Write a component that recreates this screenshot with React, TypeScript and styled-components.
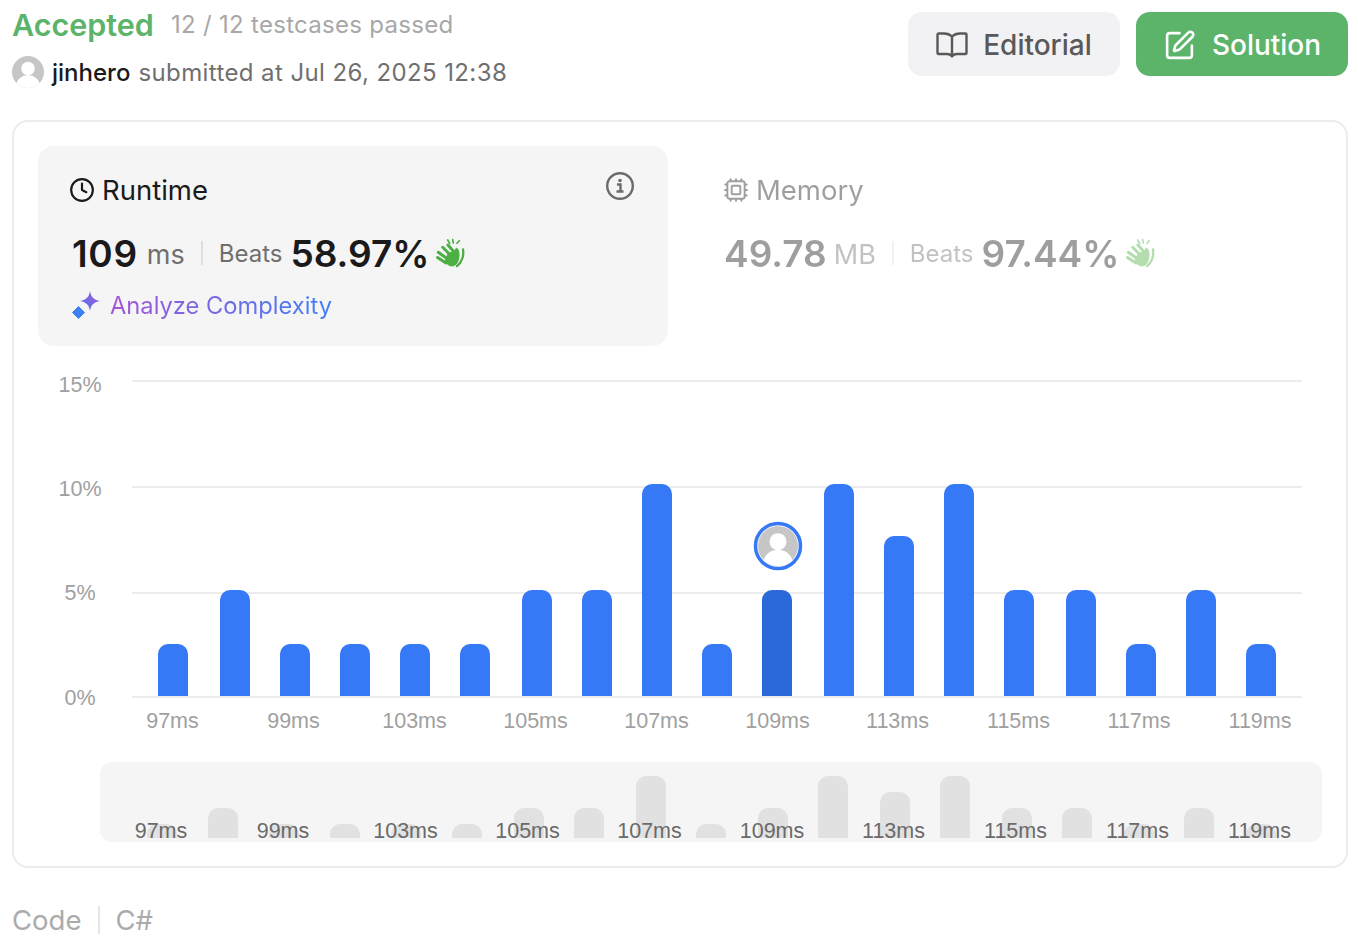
import React from "react";
import styled, { createGlobalStyle } from "styled-components";
import { Clock, Cpu, SquarePen } from "lucide-react";

const Global = createGlobalStyle`
  html, body { margin: 0; padding: 0; background: #fff; }
  body { font-family: Inter, "Liberation Sans", sans-serif; color: #1a1a1a; }
`;
const Page = styled.div`
  width: 1358px; height: 942px; box-sizing: border-box; padding: 12px 10px 0 12px; overflow: hidden;
`;
const Header = styled.header`
  display: flex; justify-content: space-between; align-items: flex-start; height: 108px;
`;
const Summary = styled.div`
  display: flex; flex-direction: column; margin-top: -6px;
`;
const StatusLine = styled.div`
  display: flex; align-items: center; gap: 17px; height: 38px;
`;
const Status = styled.h1`
  margin: 0; font-size: 30.5px; line-height: 38px; font-weight: 600; color: #5cb46a; letter-spacing: 0;
`;
const Cases = styled.span`
  font-size: 24px; color: #a8a8a8; letter-spacing: 0.3px; margin-top: -2px;
`;
const SubmitLine = styled.div`
  display: flex; align-items: center; margin-top: 12px; height: 32px; font-size: 24px; color: #6f6f6f; letter-spacing: 0.4px;
`;
const User = styled.span`
  color: #1a1a1a; font-weight: 500; margin: 0 8px; letter-spacing: 0;
`;
const Actions = styled.div`
  display: flex; gap: 16px;
`;
const ActionButton = styled.button<{ $primary?: boolean }>`
  width: 212px; height: 64px; border: 0; border-radius: 14px; display: flex; align-items: center; justify-content: center;
  gap: ${(p) => (p.$primary ? 16 : 15)}px; padding: 2px 0 0; font: 500 28px Inter, sans-serif;
  background: ${(p) => (p.$primary ? "#5cb36a" : "#f2f2f4")};
  color: ${(p) => (p.$primary ? "#fff" : "#595959")};
`;
const Card = styled.section`
  box-sizing: border-box; width: 1336px; height: 748px; border: 2px solid #ececec; border-radius: 16px; padding-top: 24px;
`;
const Metrics = styled.div`
  display: flex; height: 200px; padding-left: 24px;
`;
const RuntimePanel = styled.div`
  box-sizing: border-box; width: 630px; background: #f5f5f5; border-radius: 16px; padding: 28px 33px 0 31px;
`;
const MemoryPanel = styled.div`
  padding: 28px 0 0 55px; opacity: 0.42;
`;
const TitleRow = styled.div`
  display: flex; align-items: center; justify-content: space-between; height: 32px;
`;
const Title = styled.div`
  display: flex; align-items: center; gap: 7px; font-size: 27.5px; line-height: 32px;
`;
const Values = styled.div<{ $inset: number }>`
  display: flex; align-items: center; margin-top: 24px; height: 46px; padding-left: ${(p) => p.$inset}px;
`;
const Big = styled.span<{ $track?: number }>`
  font-size: 37px; font-weight: 600; letter-spacing: ${(p) => p.$track ?? 0}px;
`;
const Unit = styled.span<{ $gap: number }>`
  font-size: 27px; color: #6f6f6f; margin-left: ${(p) => p.$gap}px; margin-top: 2px;
`;
const Rule = styled.span`
  width: 2px; height: 24px; background: #dedede; margin: 0 16px;
`;
const BeatsLabel = styled.span`
  font-size: 24px; color: #6f6f6f; margin-right: 8px;
`;
const AnalyzeLink = styled.div`
  display: flex; align-items: center; gap: 8px; margin-top: 14px; margin-left: 3px;
`;
const GradientText = styled.span`
  font-size: 23.7px; background: linear-gradient(90deg, #a455d6, #3f7ff5); -webkit-background-clip: text; background-clip: text; color: transparent;
`;
const ChartBox = styled.div`
  height: 416px;
`;
const MiniBox = styled.div`
  margin-left: 86px; width: 1222px; height: 80px; background: #f5f5f5; border-radius: 12px;
`;
const Plot = styled.svg`
  display: block; overflow: visible; font-family: "Liberation Sans", Arial, sans-serif;
`;
const LangLine = styled.div`
  display: flex; align-items: center; margin-top: 35px; height: 34px; font-size: 27.5px; color: #ababab;
`;
const LangRule = styled.span`
  width: 2px; height: 28px; background: #e5e5e5; margin: 0 15px 0 17px;
`;
const HandIcon = styled.svg`
  margin-left: 5px; flex: none;
`;
const InfoBadge = styled.span`
  display: flex; margin-top: -9px;
`;

const Hand = () => (
  <HandIcon width="32" height="32" viewBox="0 0 32 32" fill="none" stroke="#4caf43" strokeLinecap="round">
    <path d="M13.700 3l2 3.300M18.700 2.700l.6 3.300M25.300 3.700l-2.300 2.600" strokeWidth="1.700" />
    <path d="M3.500 20.500l8.500 5.500M4.300 15.300l9.400 6.700M8.700 10.300l8.300 8.400M14 8l6 7" strokeWidth="3" />
    <path d="M11 24.500l3-8 6-2 2.500-3.500c2 1 2.500 4 2.500 7 0 5-2 11-7.500 11-2.500 0-4-2-6.500-4.500z" fill="#4caf43" strokeWidth="1" />
    <path d="M29 12.500c1 6-1 13-6 16.500" strokeWidth="2.300" />
  </HandIcon>
);
const Sparkle = () => (
  <svg width="30" height="30" viewBox="0 0 30 30">
    <defs>
      <linearGradient id="sp" x1="0" y1="1" x2="1" y2="0">
        <stop offset="0" stopColor="#4f78f0" />
        <stop offset="1" stopColor="#a455d6" />
      </linearGradient>
    </defs>
    <path d="M18 1c1 6 3.500 8.500 10 10-6.500 1.500-9 4-10 10-1-6-3.500-8.500-10-10 6.500-1.500 9-4 10-10z" fill="url(#sp)" />
    <path d="M6.500 16.500l6 6-6 6-6-6z" fill="#3f7ff5" stroke="#3f7ff5" strokeLinejoin="round" strokeWidth="1" />
  </svg>
);
const AvatarFigure = ({ id }: { id: string }) => (
  <>
    <defs><clipPath id={id}><circle cx="16" cy="16" r="16" /></clipPath></defs>
    <g clipPath={`url(#${id})`}>
      <rect width="32" height="32" fill="#c6c6c6" />
      <circle cx="16" cy="12.500" r="6.800" fill="#fff" />
      <ellipse cx="16" cy="29" rx="11.500" ry="10" fill="#fff" />
    </g>
  </>
);
const BookIcon = () => (
  <svg width="32" height="26" viewBox="0 0 32 26" fill="none" stroke="#595959" strokeWidth="2.400" strokeLinejoin="round">
    <path d="M16 4.500C14 2.500 11 1.500 8 1.500H2.500a1 1 0 0 0-1 1V21a1 1 0 0 0 1 1H11c2 0 4 .8 5 2.500 1-1.700 3-2.500 5-2.500h8.500a1 1 0 0 0 1-1V2.500a1 1 0 0 0-1-1H24c-3 0-6 1-8 3zM16 4.500V24.500" />
  </svg>
);
const InfoIcon = () => (
  <svg width="30" height="30" viewBox="0 0 30 30" fill="none">
    <circle cx="15" cy="15" r="12.800" stroke="#6b6b6b" strokeWidth="2.400" />
    <circle cx="15" cy="9.500" r="1.800" fill="#6b6b6b" />
    <path d="M12 13.500h3.500V20M11.500 20.500h7" stroke="#6b6b6b" strokeWidth="2.400" />
  </svg>
);

const barX = [158, 220, 280, 340, 400, 460, 522, 582, 642, 702, 762, 824, 884, 944, 1004, 1066, 1126, 1186, 1246];
const barTop = [644, 590, 644, 644, 644, 644, 590, 590, 484, 644, 590, 484, 536, 484, 590, 590, 644, 590, 644];
const xLabels = ["97ms", "99ms", "103ms", "105ms", "107ms", "109ms", "113ms", "115ms", "117ms", "119ms"];
const xCenter = [172.5, 293.5, 414.5, 535.5, 656.5, 777.5, 897.5, 1018.5, 1139, 1260];
const grid = [
  { y: 381, base: 392, t: "15%" },
  { y: 487, base: 496, t: "10%" },
  { y: 593, base: 600, t: "5%" },
  { y: 697, base: 705, t: "0%" },
];
const miniX = [147, 208, 269, 330, 391, 452, 514, 574, 636, 696, 758, 818, 880, 940, 1002, 1062, 1124, 1184, 1246];
const miniH = [14, 30, 14, 14, 14, 14, 30, 30, 62, 14, 30, 62, 46, 62, 30, 30, 14, 30, 14];
const miniLabelX = [161, 283, 405.5, 527.5, 649.5, 772, 893.5, 1015.5, 1137.5, 1259.5];

const topRounded = (x: number, top: number, bottom: number, w: number, r: number) =>
  `M${x} ${bottom}V${top + r}a${r} ${r} 0 0 1 ${r}-${r}h${w - 2 * r}a${r} ${r} 0 0 1 ${r} ${r}V${bottom}z`;

const MainChart = () => (
  <Plot width="1332" height="416" viewBox="14 346 1332 416">
    {grid.map((g) => (
      <g key={g.y}>
        <line x1="132" x2="1302" y1={g.y} y2={g.y} stroke="#ececec" strokeWidth="2" />
        <text x="80" y={g.base} textAnchor="middle" fontSize="21.5" fill="#a0a0a0">{g.t}</text>
      </g>
    ))}
    {barX.map((x, i) => (
      <path key={x} d={topRounded(x, barTop[i], 696, 30, 10)} fill={i === 10 ? "#2b69db" : "#3579f6"} />
    ))}
    {xLabels.map((t, i) => (
      <text key={t} x={xCenter[i]} y="728" textAnchor="middle" fontSize="21.5" fill="#a0a0a0">{t}</text>
    ))}
    <circle cx="778" cy="546" r="22.500" fill="#fff" stroke="#3579f6" strokeWidth="3.500" />
    <svg x="758" y="526" width="40" height="40" viewBox="0 0 32 32">
      <AvatarFigure id="chart-avatar" />
    </svg>
  </Plot>
);
const MiniChart = () => (
  <Plot width="1222" height="80" viewBox="100 762 1222 80">
    {miniX.map((x, i) => (
      <path key={x} d={topRounded(x, 838 - miniH[i], 838, 30, 10)} fill="#e1e1e1" />
    ))}
    {xLabels.map((t, i) => (
      <text key={t} x={miniLabelX[i]} y="838" textAnchor="middle" fontSize="21.5" fill="#6a6a6a">{t}</text>
    ))}
  </Plot>
);

export default function App() {
  return (
    <Page>
      <Global />
      <Header>
        <Summary>
          <StatusLine>
            <Status>Accepted</Status>
            <Cases>12 / 12 testcases passed</Cases>
          </StatusLine>
          <SubmitLine>
            <svg width="32" height="32" viewBox="0 0 32 32"><AvatarFigure id="header-avatar" /></svg>
            <User>jinhero</User>
            submitted at Jul 26, 2025 12:38
          </SubmitLine>
        </Summary>
        <Actions>
          <ActionButton><BookIcon />Editorial</ActionButton>
          <ActionButton $primary><SquarePen size={33} strokeWidth={1.9} />Solution</ActionButton>
        </Actions>
      </Header>
      <Card>
        <Metrics>
          <RuntimePanel>
            <TitleRow>
              <Title><Clock size={26} strokeWidth={2} />Runtime</Title>
              <InfoBadge><InfoIcon /></InfoBadge>
            </TitleRow>
            <Values $inset={3}>
              <Big $track={0.7}>109</Big><Unit $gap={9}>ms</Unit><Rule />
              <BeatsLabel>Beats</BeatsLabel><Big>58.97%</Big><Hand />
            </Values>
            <AnalyzeLink>
              <Sparkle />
              <GradientText>Analyze Complexity</GradientText>
            </AnalyzeLink>
          </RuntimePanel>
          <MemoryPanel>
            <TitleRow>
              <Title><Cpu size={26} strokeWidth={1.8} />Memory</Title>
            </TitleRow>
            <Values $inset={1}>
              <Big>49.78</Big><Unit $gap={7}>MB</Unit><Rule />
              <BeatsLabel>Beats</BeatsLabel><Big>97.44%</Big><Hand />
            </Values>
          </MemoryPanel>
        </Metrics>
        <ChartBox><MainChart /></ChartBox>
        <MiniBox><MiniChart /></MiniBox>
      </Card>
      <LangLine>Code<LangRule />C#</LangLine>
    </Page>
  );
}
